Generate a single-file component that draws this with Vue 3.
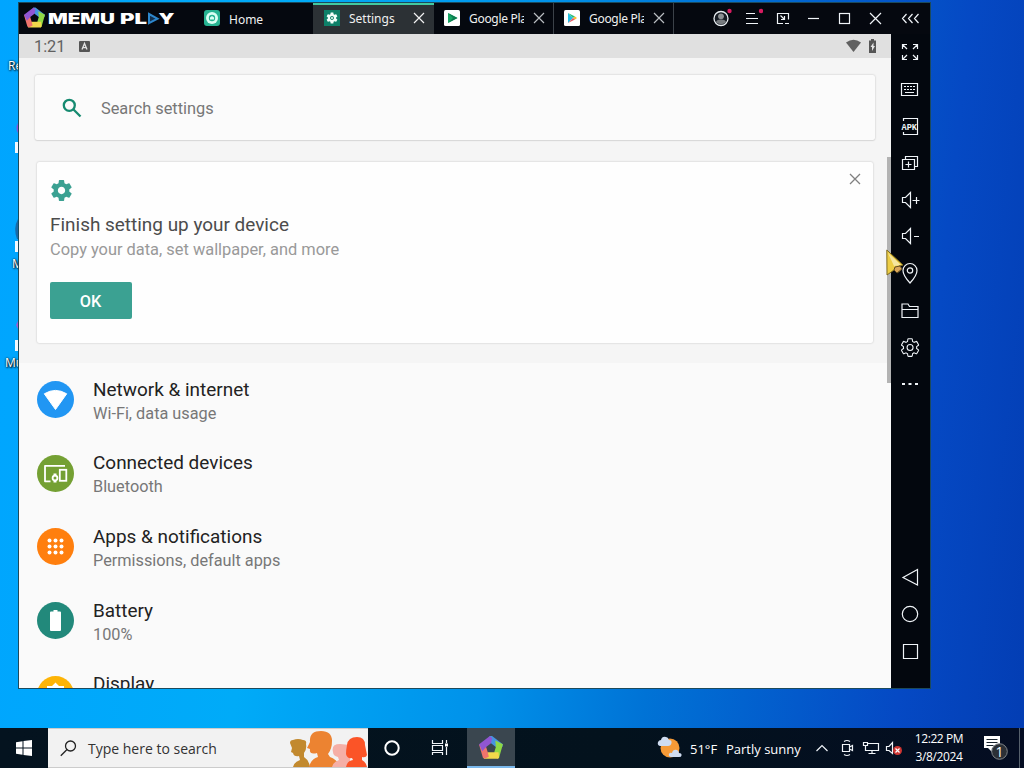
<template>
  <div class="desktop">
    <div class="shortcut" v-for="s in shortcuts" :key="s.top" :style="{ top: s.top + 'px', left: s.left + 'px' }">{{ s.label }}</div>
    <svg class="shortcut-icons" width="18" height="380" viewBox="0 0 18 380">
      <path d="M18 123 Q15 128 18 133" fill="#8b50d8" />
      <path d="M15 142h3v11h-3zM15 241h3v11h-3zM15 340h3v11h-3z" fill="#f4f8fc" />
      <path d="M18 219q-5 9-1 20h1z" fill="#176aa8" />
      <path d="M18 321l-2 4 2 4z" fill="#a35bcf" />
    </svg>

    <div class="window">
      <header class="titlebar">
        <svg class="brand" width="174" height="31" viewBox="19 3 174 31">
          <path v-for="p in pentagon" :key="p.d" :d="p.d" :fill="p.fill" transform="translate(34.500 18) scale(.95)" />
          <g class="brand-text">
            <text x="48" y="23.500" textLength="67" lengthAdjust="spacingAndGlyphs">MEMU</text>
            <text x="120" y="23.500" textLength="27" lengthAdjust="spacingAndGlyphs">PL</text>
            <text x="158.500" y="23.500" textLength="16" lengthAdjust="spacingAndGlyphs">Y</text>
          </g>
          <path d="M149 14l8.500 4.700-8.500 4.500z" fill="#12304f" stroke="#2d86cc" stroke-width="2" />
        </svg>

        <div class="tab home">
          <svg width="16" height="16" viewBox="0 0 16 16">
            <rect width="16" height="16" rx="3" fill="#27b392" />
            <circle cx="8" cy="8" r="6" fill="#d9fff3" />
            <circle cx="8" cy="8" r="3.200" fill="#27b392" />
            <path d="M6 9V7.500L8 6l2 1.500V9.500H6z" fill="#d9fff3" />
          </svg>
          <span class="tab-title">Home</span>
        </div>
        <div class="tab active">
          <svg width="16" height="16" viewBox="0 0 16 16">
            <rect width="16" height="16" fill="#0e8069" />
            <path transform="translate(1.400 1.400) scale(.55)" :d="gear" fill="#f2fffb" />
            <circle cx="8" cy="8" r="1" fill="#f2fffb" />
          </svg>
          <span class="tab-title">Settings</span>
          <svg class="close" width="12" height="12" viewBox="0 0 12 12"><path d="M1 1l10 10M11 1L1 11" /></svg>
        </div>
        <div class="tab divided" v-for="kind in ['games', 'store']" :key="kind">
          <svg width="16" height="16" viewBox="0 0 16 16">
            <rect width="16" height="16" rx="1.500" fill="#fff" />
            <template v-if="kind === 'games'">
              <path d="M4 3l9.500 5L4 13z" fill="#18a765" />
              <path d="M4 3l5 5-5 5 9.500-5z" fill="#0d7c50" />
            </template>
            <template v-else>
              <path d="M4 3v10l5-5z" fill="#22bfe5" />
              <path d="M4 3l5 5 2-1.500z" fill="#2bbd78" />
              <path d="M11 6.500L9 8l2 1.500L13 8z" fill="#f8c02c" />
              <path d="M4 13l5-5 2 1.500z" fill="#e95a64" />
            </template>
          </svg>
          <span class="tab-title clipped">Google Play</span>
          <svg class="close dim" width="12" height="12" viewBox="0 0 12 12"><path d="M1 1l10 10M11 1L1 11" /></svg>
        </div>

        <div class="controls">
          <span class="control">
            <svg width="22" height="22" viewBox="0 0 22 22">
              <circle cx="11" cy="11.500" r="7" fill="#171c24" stroke="#e8ecf0" stroke-width="1.300" />
              <circle cx="11" cy="9.300" r="2.900" fill="#8c9093" />
              <path d="M6 15.500q0-3 5-3t5 3q-5 3.500-10 0z" fill="#777b7f" />
              <circle cx="19.500" cy="4" r="2.200" fill="#d81b60" />
            </svg>
          </span>
          <span class="control">
            <svg width="22" height="22" viewBox="0 0 22 22">
              <path class="line" d="M5 6.500h9M5 11.500h12M5 16.500h12" />
              <circle cx="20" cy="4" r="2.200" fill="#d81b60" />
            </svg>
          </span>
          <span class="control">
            <svg width="22" height="22" viewBox="0 0 22 22">
              <path class="line" d="M11 16.500H5.500v-10h11v6M13 16.500h4M8.500 8.500l4 4M9 12.500h3.500V9" />
            </svg>
          </span>
          <span class="control">
            <svg width="22" height="22" viewBox="0 0 22 22"><path class="line" d="M5 11.500h11" /></svg>
          </span>
          <span class="control">
            <svg width="22" height="22" viewBox="0 0 22 22"><rect class="line" x="5.500" y="6.500" width="10" height="10" /></svg>
          </span>
          <span class="control">
            <svg width="22" height="22" viewBox="0 0 22 22"><path class="line" d="M5 6l11 11M16 6L5 17" /></svg>
          </span>
          <span class="control collapse">
            <svg width="22" height="22" viewBox="0 0 22 22"><path class="line" d="M7.500 7l-4 4.500 4 4.500M13.500 7l-4 4.500 4 4.500M19.500 7l-4 4.500 4 4.500" /></svg>
          </span>
        </div>
      </header>

      <div class="body">
        <main class="screen">
          <div class="statusbar">
            <span class="time">1:21</span>
            <svg width="11" height="11" viewBox="0 0 11 11">
              <rect width="11" height="11" rx="1" fill="#555" />
              <path d="M3 8.500L5.500 2.500 8 8.500M4 6.700h3" fill="none" stroke="#e4e4e4" stroke-width="1.300" />
            </svg>
            <svg class="signal" width="31" height="14" viewBox="0 0 31 14">
              <path d="M0 3.500Q7.500-2 15 3.500L7.500 13z" fill="#606060" />
              <path d="M23 1.500h2V0h3v1.500h2V14h-7z" fill="#555" />
              <path d="M27.500 3.500L24.500 8H26v4l3-5h-1.500z" fill="#e4e4e4" />
            </svg>
          </div>

          <div class="searchbox">
            <svg width="20" height="20" viewBox="0 0 20 20">
              <circle cx="7.300" cy="7.300" r="5.500" /><path d="M11.500 11.500l7 7" />
            </svg>
            <span>Search settings</span>
          </div>

          <section class="suggestion">
            <svg class="gear" width="25" height="25" viewBox="0 0 24 24"><path :d="gear" /></svg>
            <svg class="dismiss" width="12" height="12" viewBox="0 0 12 12"><path d="M1 1l10 10M11 1L1 11" /></svg>
            <h2>Finish setting up your device</h2>
            <p>Copy your data, set wallpaper, and more</p>
            <button>OK</button>
          </section>

          <ul class="settings">
            <li v-for="item in items" :key="item.title">
              <svg width="37" height="37" viewBox="0 0 37 37">
                <circle cx="18.500" cy="18.500" r="18.500" :fill="item.color" />
                <path v-if="item.icon === 'wifi'" d="M7.300 12.800Q18.500 6 29.700 12.800L18.500 28.500z" fill="#fff" stroke="#fff" stroke-linejoin="round" />
                <g v-else-if="item.icon === 'devices'" fill="none" stroke="#fff" stroke-width="1.800">
                  <path d="M28 10.800H8v15.500h5.500" stroke-linejoin="round" />
                  <rect x="22.800" y="14.800" width="6.500" height="11" />
                  <circle cx="18" cy="23" r="2.400" />
                  <path d="M16.500 19.500h3M16.500 26.500h3" />
                </g>
                <g v-else-if="item.icon === 'apps'" fill="#fff">
                  <circle v-for="n in 9" :key="n" :cx="12.500 + ((n - 1) % 3) * 6" :cy="12.500 + Math.floor((n - 1) / 3) * 6" r="2" />
                </g>
                <path v-else-if="item.icon === 'battery'" d="M13 10.500q0-1 1-1h2.500V8h4v1.500H23q1 0 1 1V28q0 1-1 1h-9q-1 0-1-1z" fill="#fff" />
                <path v-else d="M18.500 6.500l3.500 3.500h5v5l3.500 3.500-3.500 3.500v5h-5l-3.500 3.500-3.500-3.500h-5v-5l-3.500-3.500 3.500-3.500v-5h5zM18.500 13a5.500 5.500 0 1 0 0 11a5.500 5.500 0 1 0 0-11z" fill="#fff" fill-rule="evenodd" />
              </svg>
              <div class="labels">
                <div class="title">{{ item.title }}</div>
                <div class="sub">{{ item.sub }}</div>
              </div>
            </li>
          </ul>
          <div class="scrollbar"></div>
        </main>

        <aside class="toolbar">
          <span v-for="tool in tools" :key="tool.name" :class="['tool', tool.name]">
            <svg width="22" height="22" viewBox="0 0 22 22">
              <path class="line" :d="tool.d" />
              <text v-if="tool.name === 'apk'" x="2.500" y="15" textLength="15.500" lengthAdjust="spacingAndGlyphs" class="apk-text">APK</text>
              <g v-if="tool.name === 'gear-tool'" transform="translate(.500 1) scale(.88)">
                <path class="line" :d="gearOutline" />
                <circle class="line" cx="12" cy="12" r="3.400" />
              </g>
              <circle v-if="tool.name === 'location'" class="line" cx="11" cy="8.500" r="2.700" />
              <circle v-if="tool.name === 'round'" class="line" cx="11" cy="11" r="7.700" />
            </svg>
          </span>
        </aside>
      </div>
    </div>

    <svg class="pointer" width="20" height="28" viewBox="0 0 20 28">
      <path d="M.800 1L17 16l-4 1 3 3-5 4-3-3-7 5z" fill="#edcd45" stroke="#7c691f" />
      <path d="M2 4l13 12-7 1z" fill="#f5e6a0" />
      <path d="M9 18l5-1 2 3-5 4-3-3z" fill="#dba75a" stroke="#604a22" />
    </svg>

    <footer class="taskbar">
      <div class="start">
        <svg width="16" height="16" viewBox="0 0 16 16"><path d="M0 2.200L6.500 1.300V7.500H0zM7.500 1.100L16 0V7.500H7.500zM0 8.500h6.500v6.200L0 13.800zM7.500 8.500H16V16l-8.500-1.100z" fill="#fff" /></svg>
      </div>
      <div class="search">
        <svg width="17" height="17" viewBox="0 0 17 17"><circle cx="10.500" cy="6" r="5" /><path d="M7 9.500L.800 15.800" /></svg>
        <span>Type here to search</span>
        <svg class="people" width="79" height="38" viewBox="0 1 79 38">
          <path d="M4 39q1-5 7-7l-1-4q-5 1-6-3l-2-1 1-4-2-5q0-3 3-3 5-2 10 0 4 0 3 4 1 5-2 9v4q5 3 6 10z" fill="#c2892e" />
          <path d="M20 39q2-8 9-10l-1-4q-8 2-7-4l-3-1 3-6Q20 3 32 3q11 0 11 10 0 8-4 13l2 3q8 3 10 10z" fill="#ec8331" />
          <path d="M43 39q1-5 7-7l-1-3q-5-1-5-5-2-8 7-8l10 1v22z" fill="#f5afa6" />
          <path d="M57 39q1-6 7-7l-1-2q-5 1-6-4 0-4 1-9 1-8 10-8 8 0 8 8l2 10q-1 3-5 2v3q4 2 5 7z" fill="#fb5427" />
        </svg>
      </div>
      <div class="task">
        <svg width="18" height="18" viewBox="0 0 18 18"><circle cx="9" cy="9" r="6.700" fill="none" stroke="#fff" stroke-width="2" /></svg>
      </div>
      <div class="task">
        <svg width="18" height="18" viewBox="0 0 18 18"><path class="line" d="M1.500 1v3.500h10V1M1.500 16v-2.500h10V16M1.500 6.500v5h10v-5zM15.500 1v3M15.500 8v8" /><path d="M14 4.500h3v3h-3z" fill="#fff" /></svg>
      </div>
      <div class="task running">
        <svg width="26" height="26" viewBox="-13 -14 26 26"><path v-for="p in pentagon" :key="p.d" :d="p.d" :fill="p.fill" transform="scale(1.080)" /></svg>
      </div>
      <div class="weather">
        <svg width="26" height="24" viewBox="0 0 26 24">
          <circle cx="13" cy="12" r="9.500" fill="#f69a36" />
          <path d="M3 10q-3-1-2-4 1-2 3-2 1-4 5-3 2 0 3 3 3 0 2.500 3-.500 3-3.500 3zM14 21q-3-1-2-3 1-2 3-1 1-4 5-3 2 1 2 3 3 0 2.500 2.500 0 1.500-2.500 1.500z" fill="#cfdcf0" />
        </svg>
        <span class="temp">51°F</span>
        <span class="sky">Partly sunny</span>
      </div>
      <div class="tray">
        <svg width="14" height="18" viewBox="0 0 14 18"><path class="line" d="M1.500 12L7 6.500l5.500 5.500" /></svg>
        <svg width="14" height="18" viewBox="0 0 14 18"><path class="line" d="M4 2.500q3-2 6 0M4 15.500q3 2 6 0M2.500 5.500h7v7h-7zM9.500 8l3-1.500v5l-3-1.500" /></svg>
        <svg width="18" height="18" viewBox="0 0 18 18"><path class="line" d="M6 4.500h10.500v7h-13V8M10 11.500v3M6.500 14.500h7M1.500 3.500h4v3h-4zM3.500 6.500V9" /></svg>
        <svg width="18" height="18" viewBox="0 0 18 18">
          <path class="line" d="M1.500 7.500H4l3.500-4v11L4 11.500H1.500z" />
          <circle cx="12.500" cy="11.500" r="4.500" fill="#cf3532" /><path d="M10.500 9.500l4 4M14.500 9.500l-4 4" stroke="#fff" stroke-width="1.200" />
        </svg>
      </div>
      <div class="clock">
        <div>12:22 PM</div>
        <div>3/8/2024</div>
      </div>
      <div class="notice">
        <svg width="25" height="30" viewBox="0 -1 25 30">
          <path d="M1 2h16v12H9v4l-4-4H1z" fill="#fff" /><path d="M3.500 5.500h11M3.500 8.500h11M3.500 11.500h7" stroke="#15202b" />
          <circle cx="16.500" cy="17.500" r="7.800" fill="#2b3036" stroke="#7f8488" />
          <text x="16.500" y="22.500" text-anchor="middle">1</text>
        </svg>
      </div>
      <div class="peek"></div>
    </footer>
  </div>
</template>

<script setup>
const shortcuts = [
  { label: 'Re', top: 58, left: 8 },
  { label: 'Mi', top: 256, left: 12 },
  { label: 'Mul', top: 355, left: 5 }
]

const items = [
  { title: 'Network & internet', sub: 'Wi-Fi, data usage', color: '#2196f3', icon: 'wifi' },
  { title: 'Connected devices', sub: 'Bluetooth', color: '#74a033', icon: 'devices' },
  { title: 'Apps & notifications', sub: 'Permissions, default apps', color: '#ff7f0e', icon: 'apps' },
  { title: 'Battery', sub: '100%', color: '#22897b', icon: 'battery' },
  { title: 'Display', sub: 'Wallpaper, sleep, font size', color: '#fdb406', icon: 'display' }
]

// Five blades around an open core
const pentagon = [
  { d: 'M-1-11H1L11-3.500 10.500-1 4.500-1 0-4.500-3-8z', fill: '#4794e0' },
  { d: 'M11-3.500L7.500 9 6 10 3 4 4.500-1 4-7z', fill: '#8fd944' },
  { d: 'M7.500 9L6.500 10H-6.500L-7 8-3 4H3L7 4z', fill: '#f1d84b' },
  { d: 'M-6 10L-7.500 9-11-3-9-4-4.500-1-3 4-2 8z', fill: '#f0746c' },
  { d: 'M-11-3.500L-1-11 1-9 0-4.500-4.500-1-8 3z', fill: '#9156d3' }
]

const gear = 'M19.430 12.980c.040-.320.070-.640.070-.980s-.030-.660-.070-.980l2.110-1.650c.190-.150.240-.420.120-.640l-2-3.460c-.120-.220-.390-.300-.610-.220l-2.490 1c-.520-.400-1.080-.730-1.690-.980l-.380-2.650C14.460 2.180 14.250 2 14 2h-4c-.250 0-.460.180-.490.420l-.380 2.650c-.610.250-1.170.590-1.690.980l-2.490-1c-.230-.090-.490 0-.610.220l-2 3.460c-.130.220-.070.490.120.640l2.110 1.650c-.040.320-.070.650-.070.980s.030.660.070.980l-2.110 1.650c-.190.150-.240.420-.120.640l2 3.460c.120.220.390.300.610.220l2.490-1c.520.400 1.080.730 1.690.980l.380 2.650c.030.240.240.420.490.420h4c.250 0 .460-.180.490-.420l.380-2.650c.610-.250 1.170-.590 1.690-.980l2.490 1c.230.090.490 0 .610-.220l2-3.460c.120-.220.070-.490-.120-.640l-2.110-1.650zM12 15.500c-1.930 0-3.500-1.570-3.500-3.500s1.570-3.500 3.500-3.500 3.500 1.570 3.500 3.500-1.570 3.500-3.500 3.500z'
const gearOutline = gear.split('zM')[0] + 'z'

const tools = [
  { name: 'expand', d: 'M3.500 8V3.500H8M4 4l4 4M14 3.500h4.500V8M18 4l-4 4M3.500 14v4.500H8M4 18l4-4M14 18.500h4.500V14M18 18l-4-4' },
  { name: 'keyboard', d: 'M2.500 5.500h16v12h-16zM5 8.500h2m1 0h2m1 0h2m1 0h2M5 11.500h2m1 0h2m1 0h2m1 0h2M6 14.500h9' },
  { name: 'apk', d: 'M4.500 6V3.500h14v16h-14V17' },
  { name: 'multi', d: 'M3.500 7.500h12v10h-12zM6.500 7V4.500h12v10H16M9.500 9.500v6M6.500 12.500h6' },
  { name: 'vol-up', d: 'M3.500 8.500h3l5-5v15l-5-5h-3zM13.500 11.500h7M17.500 8v7' },
  { name: 'vol-down', d: 'M3.500 8.500h3l5-5v15l-5-5h-3zM15 11.500h5' },
  { name: 'location', d: 'M11 1.500a7 7 0 0 0-7 7c0 5 7 12.500 7 12.500s7-7.500 7-12.500a7 7 0 0 0-7-7z' },
  { name: 'folder', d: 'M3 18.500V5h6l1.500 2.500H19v11zM3 10.500h16' },
  { name: 'gear-tool', d: '' },
  { name: 'more', d: 'M3 11h3M9.500 11h3M16 11h3' },
  { name: 'back', d: 'M18.500 3.500L4 11.500l14.500 7.500z' },
  { name: 'round', d: '' },
  { name: 'recent', d: 'M4.500 4.500h14v14h-14z' }
]
</script>

<style>
body {
  margin: 0;
  overflow: hidden;
}
</style>

<style scoped>
.desktop {
  position: relative;
  width: 1024px;
  height: 768px;
  overflow: hidden;
  background: linear-gradient(96deg, #00a5ff 0%, #00abf8 28%, #0092ea 50%, #0073d6 65%, #0549c4 88%, #033db3 100%);
  display: flex;
  flex-direction: column;
  justify-content: flex-end;
  font-family: 'Open Sans', 'Noto Sans', sans-serif;
}

svg {
  display: block;
  flex: none;
}

.line {
  fill: none;
  stroke: #f0f4f8;
  stroke-width: 1.2;
}

.shortcut {
  position: absolute;
  font-size: 12px;
  line-height: 16px;
  color: #fff;
  text-shadow: 1px 1px 2px #000, 0 0 2px #000;
}

.shortcut-icons {
  position: absolute;
  left: 0;
  top: 0;
}

.window {
  position: absolute;
  left: 18px;
  top: 2px;
  width: 913px;
  height: 687px;
  box-sizing: border-box;
  border: 1px solid #1c4a5c;
  background: #03070e;
  display: flex;
  flex-direction: column;
}

.titlebar {
  height: 31px;
  flex: none;
  display: flex;
  background: #05080f;
}

.brand-text {
  font: 900 14.5px Inter, sans-serif;
  fill: #fff;
}

.tab {
  width: 120px;
  height: 31px;
  box-sizing: border-box;
  padding: 0 9px 1px 11px;
  display: flex;
  align-items: center;
  color: #f0f0f0;
  font: 12px 'Noto Sans', sans-serif;
}

.home .tab-title {
  margin-top: 2px;
}

.tab.active {
  width: 121px;
  background: #2c3135;
  border-top: 2px solid #42c9a0;
  padding-bottom: 3px;
}

.tab.divided {
  border-right: 1px solid #3c4249;
  padding-left: 10px;
  padding-right: 8px;
}

.tab-title {
  margin-left: 9px;
  white-space: nowrap;
}

.clipped {
  width: 55px;
  overflow: hidden;
  letter-spacing: -0.3px;
}

.close {
  margin-left: auto;
  fill: none;
  stroke: #f2f2f2;
  stroke-width: 1.2;
}

.dim {
  stroke: #b9bdc1;
}

.controls {
  margin-left: auto;
  display: flex;
}

.control {
  width: 31px;
  padding-bottom: 1px;
  display: flex;
  align-items: center;
  justify-content: center;
}

.collapse {
  width: 37px;
  padding-right: 2px;
}

.body {
  flex: 1;
  min-height: 0;
  display: flex;
}

.screen {
  position: relative;
  width: 872px;
  overflow: hidden;
  background: #f5f5f5;
  font-family: Roboto, sans-serif;
}

.statusbar {
  height: 24px;
  padding: 0 14px 0 15px;
  display: flex;
  align-items: center;
  background: #e0e0e0;
}

.time {
  width: 45px;
  font-size: 16.3px;
  color: #606060;
}

.signal {
  margin-left: auto;
}

.searchbox {
  margin: 17px 16px 0;
  height: 65px;
  display: flex;
  align-items: center;
  padding-left: 27px;
  background: #fbfbfb;
  border-radius: 2px;
  box-shadow: 0 0 2px rgba(0, 0, 0, 0.24), 0 1px 1px rgba(0, 0, 0, 0.06);
  color: #777;
  font-size: 16.35px;
}

.searchbox span {
  margin-top: 2px;
}

.searchbox svg {
  margin-right: 19px;
  fill: none;
  stroke: #168a70;
  stroke-width: 2.3;
}

.suggestion {
  position: relative;
  height: 181px;
  box-sizing: border-box;
  margin: 22px 18px 0;
  padding: 16px 13px;
  background: #fefefe;
  border-radius: 2px;
  box-shadow: 0 0 2px rgba(0, 0, 0, 0.24);
}

.gear {
  margin-left: -1px;
  fill: #3ba192;
}

.dismiss {
  position: absolute;
  right: 12px;
  top: 11px;
  stroke: #808080;
  stroke-width: 1.3;
}

h2 {
  margin: 10px 0 0;
  font-size: 18.95px;
  font-weight: 400;
  line-height: 24px;
  color: #4c4c4c;
}

p {
  margin: 0;
  font-size: 16.4px;
  line-height: 25px;
  color: #999;
}

button {
  display: block;
  margin: 20px 0 0 -0.5px;
  padding-top: 2px;
  width: 82px;
  height: 37px;
  border: 0;
  border-radius: 2px;
  background: #3ba192;
  color: #fff;
  font: 500 16.3px Roboto, sans-serif;
}

.settings {
  list-style: none;
  margin: 20px 0 0;
  padding: 0;
  background: #fafafa;
}

.settings li {
  height: 73.6px;
  display: flex;
  align-items: center;
  padding-left: 18px;
}

.labels {
  margin-left: 19px;
  padding-top: 4px;
}

.title {
  font-size: 18.95px;
  line-height: 24px;
  color: #222;
}

.sub {
  font-size: 16.3px;
  line-height: 24px;
  color: #777;
}

.scrollbar {
  position: absolute;
  right: 0;
  top: 123px;
  width: 4px;
  height: 226px;
  background: #b3b3b3;
}

.toolbar {
  width: 37px;
  padding-right: 2px;
  display: flex;
  flex-direction: column;
  background: #03070e;
}

.tool {
  height: 36.9px;
  flex: none;
  display: flex;
  align-items: center;
  justify-content: center;
}

.tool svg {
  margin-bottom: 1px;
}

.more .line {
  stroke-width: 2;
}

.back {
  margin-top: auto;
}

.recent {
  margin-bottom: 18px;
}

.apk-text {
  font: 700 9px 'Liberation Mono', monospace;
  fill: #f0f4f8;
}

.pointer {
  position: absolute;
  left: 886px;
  top: 249px;
}

.taskbar {
  height: 40px;
  display: flex;
  background: linear-gradient(90deg, #04131f, #03121d 60%, #040d22);
  color: #fff;
}

.start,
.task {
  width: 48px;
  display: flex;
  align-items: center;
  justify-content: center;
}

.search {
  width: 320px;
  box-sizing: border-box;
  padding-left: 12px;
  display: flex;
  align-items: center;
  background: #f2f2f2;
  border: solid #ccc;
  border-width: 1px 0;
  color: #333;
  font-size: 14px;
  white-space: nowrap;
}

.search span {
  margin-left: 11px;
}

.search > svg:first-child {
  fill: none;
  stroke: #222;
  stroke-width: 1.3;
}

.people {
  margin-left: auto;
}

.running {
  margin-left: 3px;
  box-sizing: border-box;
  background: #3a464f;
  border-bottom: 2px solid #7ab8ec;
}

.weather {
  margin-left: 142px;
  width: 157px;
  display: flex;
  align-items: center;
  font-size: 13px;
  white-space: nowrap;
}

.weather span {
  padding-top: 1px;
}

.temp {
  margin-left: 7px;
  width: 36px;
}

.tray {
  display: flex;
  align-items: center;
  gap: 8px;
}

.tray svg:nth-child(1) {
  margin: 0 3px 0 1px;
}

.tray svg:nth-child(4) {
  margin-left: -3px;
}

.clock {
  width: 72px;
  padding-right: 2px;
  display: flex;
  flex-direction: column;
  justify-content: center;
  text-align: center;
  font-size: 12px;
  line-height: 18px;
  letter-spacing: -0.4px;
  white-space: nowrap;
}

.notice {
  margin-left: 6px;
  display: flex;
  align-items: center;
}

.notice text {
  font: 14px 'Open Sans', sans-serif;
  fill: #fff;
}

.peek {
  margin-left: auto;
  margin-right: 4px;
  width: 1px;
  background: #56616c;
}
</style>
